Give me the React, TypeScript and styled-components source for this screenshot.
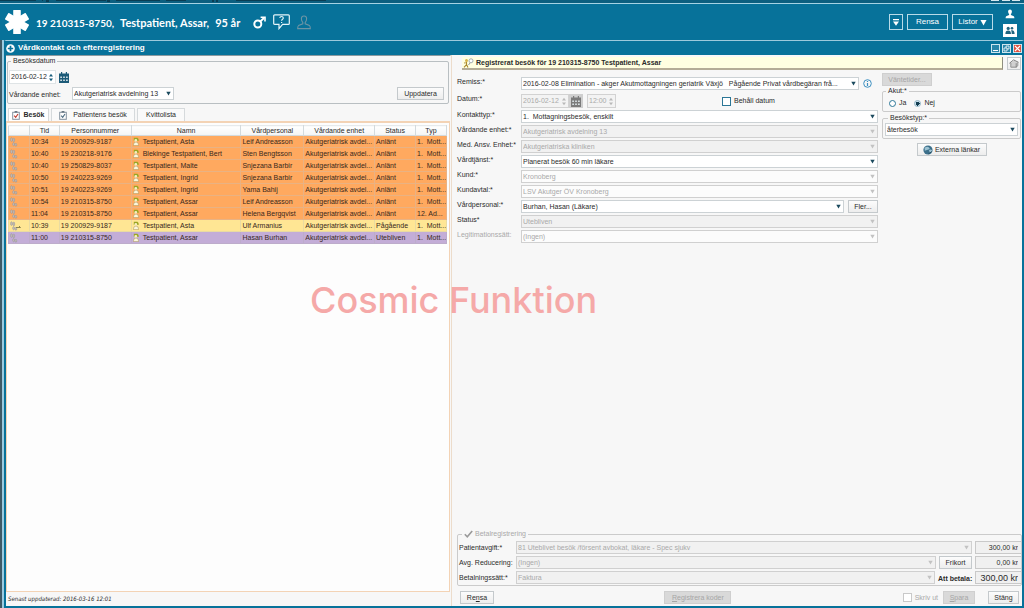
import React, { ReactNode, useId } from "react";
import styled, { createGlobalStyle, css } from "styled-components";

const teal = "#07729a";
const ink = "#2b2b2b";
const faded = "#a9a9a9";

const GlobalStyle = createGlobalStyle`
  * { box-sizing: border-box; }
  body { margin: 0; background: #f7f7f7; }
  body, button, input, select { font-family: "Liberation Sans", Arial, sans-serif; font-size: 7px; line-height: 8px; color: ${ink}; }
  svg { display: block; flex: none; }
`;

const Page = styled.div`
  display: flex;
  flex-direction: column;
  min-height: 100vh;
  background: #f7f7f7;
`;

/* ---------- top of the window ---------- */

const MenuStrip = styled.div`
  display: flex;
  justify-content: space-between;
  height: 4px;
  background: #0c5f80;
  border-bottom: 1px solid #a5d3e4;
`;

const PatientBar = styled.header`
  display: flex;
  align-items: center;
  height: 36px;
  padding: 0 7px 0 5px;
  background: ${teal};
  color: #fff;
`;

const PatientText = styled.h1`
  display: flex;
  align-items: baseline;
  gap: 6px;
  margin: 0 13px 0 7px;
  padding-top: 2px;
  font-family: Lato, sans-serif;
  font-size: 11px;
  line-height: 14px;
  font-weight: 700;
  white-space: nowrap;
`;

const PatientNumber = styled.span`
  font-size: 10px;
`;

const PatientIcons = styled.div`
  display: flex;
  align-items: center;
  gap: 7px;
`;

const BarActions = styled.div`
  display: flex;
  align-items: center;
  gap: 4px;
  margin-left: auto;
`;

const BarButton = styled.button<{ $w: number }>`
  display: flex;
  align-items: center;
  justify-content: center;
  gap: 2px;
  width: ${(p) => p.$w}px;
  height: 16px;
  padding: 0;
  border: 1px solid #b8dbe8;
  background: transparent;
  color: #fff;
  font-size: 8px;
`;

const UserStack = styled.div`
  display: flex;
  flex-direction: column;
  align-items: center;
  gap: 3px;
  width: 14px;
  margin-left: 6px;
`;

const IconBox = styled.button<{ $bg?: string }>`
  display: flex;
  align-items: center;
  justify-content: center;
  width: 14px;
  height: 13px;
  padding: 0;
  border: 0;
  background: ${(p) => p.$bg ?? "transparent"};
`;

/* ---------- inner window ---------- */

const Body = styled.div`
  flex: 1;
  display: flex;
  border-left: 2px solid #3f5a66;
  background: #9ccbe0;
  padding-left: 2px;
`;

const InnerWindow = styled.main`
  flex: 1;
  min-width: 0;
  display: flex;
  flex-direction: column;
  border: 2px solid ${teal};
  border-top: 1px solid #9cc9dc;
  background: #f7f7f7;
`;

const TitleBar = styled.div`
  display: flex;
  align-items: center;
  gap: 2px;
  height: 14px;
  background: ${teal};
  color: #fff;
`;

const Title = styled.h2`
  flex: 1;
  margin: 0 0 0 1px;
  font-size: 8px;
  line-height: 10px;
  font-weight: 700;
`;

const WindowButton = styled.button<{ $close?: boolean }>`
  display: flex;
  align-items: center;
  justify-content: center;
  width: 9px;
  height: 9px;
  padding: 0;
  border: 1px solid #cfe6ef;
  background: ${(p) => (p.$close ? "#e0503f" : "#2a86a9")};
`;

const Split = styled.div`
  flex: 1;
  display: grid;
  grid-template-columns: minmax(0, 445fr) minmax(0, 571fr);
`;

const LeftPane = styled.section`
  display: flex;
  flex-direction: column;
  border-top: 1px solid #8c9aa0;
  border-right: 1px solid #f7f7f7;
`;

const Row = styled.div<{ $gap?: number; $center?: boolean }>`
  display: flex;
  align-items: center;
  justify-content: ${(p) => (p.$center ? "center" : "flex-start")};
  gap: ${(p) => p.$gap ?? 0}px;
`;

const Group = styled.fieldset<{ $tone?: string }>`
  min-width: 0;
  margin: 0;
  padding: 0;
  border: 1px solid ${(p) => p.$tone ?? "#cbcbcb"};
  border-radius: 2px;
`;

const Legend = styled.legend<{ $faded?: boolean }>`
  display: flex;
  align-items: center;
  gap: 2px;
  margin-left: 3px;
  padding: 0 2px;
  color: ${(p) => (p.$faded ? faded : ink)};
`;

const VisitGroup = styled(Group)`
  margin: 1px 1px 0;
  height: 47px;
  padding-top: 5px;
  & ${Row} { padding: 0 4px 0 1px; }
  & ${Row} + ${Row} { margin-top: 3px; }
`;

const PushRight = styled.div`
  margin-left: auto;
`;

const UnitLabel = styled.label`
  width: 63px;
  padding-top: 3px;
`;

const Button = styled.button<{ $w?: number }>`
  display: inline-flex;
  align-items: center;
  justify-content: center;
  gap: 2px;
  width: ${(p) => (p.$w ? `${p.$w}px` : "auto")};
  height: 13px;
  flex: none;
  padding: 0;
  border: 1px solid #c4c9cc;
  background: linear-gradient(#fcfcfc, #ededed);
  color: ${ink};
  white-space: nowrap;
  &:disabled { background: #d9d9d9; border-color: #cfcfcf; color: #a6a6a6; }
`;

const SpinBox = styled.div<{ $w: number; $off?: boolean }>`
  display: flex;
  align-items: center;
  width: ${(p) => p.$w}px;
  height: 14px;
  padding: 0 2px 0 1px;
  border: 1px solid ${(p) => (p.$off ? "#d2d2d2" : "#dfe4e6")};
  background: ${(p) => (p.$off ? "#f3f3f3" : "#fff")};
`;

const SpinInput = styled.input`
  flex: 1;
  min-width: 0;
  padding: 0;
  border: 0;
  background: transparent;
  &:disabled { color: ${faded}; }
`;

const DateButton = styled.button<{ $off?: boolean }>`
  display: flex;
  align-items: center;
  justify-content: center;
  width: 14px;
  height: 14px;
  padding: 0;
  border: 0;
  background: ${(p) => (p.$off ? "#cfcfcf" : "transparent")};
`;

const SelectCell = styled.div<{ $w?: number }>`
  display: grid;
  align-items: center;
  ${(p) => (p.$w ? css`width: ${p.$w}px;` : css`flex: 1; min-width: 0;`)}
  & > * { grid-area: 1 / 1; }
  & > svg { justify-self: end; margin-right: 3px; pointer-events: none; }
`;

const SelectBox = styled.select<{ $tone?: "grey" | "white" }>`
  appearance: none;
  width: 100%;
  height: 13px;
  padding: 0 8px 0 1px;
  border: 1px solid #ccd2d5;
  border-radius: 0;
  background: #fff;
  text-overflow: ellipsis;
  &:disabled {
    opacity: 1;
    color: ${faded};
    border-color: #d0d0d0;
    background: ${(p) => (p.$tone === "white" ? "#fcfcfc" : "#f1f1f1")};
  }
`;

/* ---------- visit list ---------- */

const Tabs = styled.div`
  display: flex;
  gap: 2px;
  margin: 4px 0 0 2px;
`;

const Tab = styled.button<{ $on?: boolean; $w: number }>`
  display: flex;
  align-items: center;
  justify-content: center;
  gap: ${(p) => (p.$on ? 3 : 6)}px;
  width: ${(p) => p.$w}px;
  height: 13px;
  padding: 0;
  border: 1px solid #d6dadc;
  border-bottom: 0;
  background: ${(p) => (p.$on ? "#fff" : "#fafafa")};
  font-weight: ${(p) => (p.$on ? 700 : 400)};
`;

const ListPanel = styled.div`
  flex: 1;
  padding: 2px 2px 0 1px;
  border: 1px solid #f3d3b5;
  border-width: 2px 1px 1px;
  background: #fdfdfd;
`;

const VisitTable = styled.table`
  width: 100%;
  table-layout: fixed;
  border-collapse: collapse;
`;

const HeadCell = styled.th`
  height: 10px;
  padding: 0;
  border: 1px solid #d3dadd;
  border-top-color: #e6eaec;
  background: linear-gradient(#fff, #f3f4f4);
  font-weight: 400;
`;

const rowColors = { arrived: "#ffa95f", ongoing: "#ffe694", missed: "#c3add7" };
const rowLines = { arrived: "#e9b283", ongoing: "#e9dba2", missed: "#bdaccb" };

const VisitRow = styled.tr<{ $state: keyof typeof rowColors }>`
  background: ${(p) => rowColors[p.$state]};
  color: #38281c;
  & > td { border-color: ${(p) => rowLines[p.$state]}; }
`;

const Cell = styled.td`
  height: 12px;
  padding: 0 0 0 1px;
  border: 1px solid;
  overflow: hidden;
  white-space: pre;
`;

const NameCell = styled.div`
  display: flex;
  align-items: center;
  gap: 4px;
`;

const Updated = styled.p`
  margin: 0;
  padding: 3px 2px;
  font-family: "DejaVu Sans Condensed", "DejaVu Sans", sans-serif;
  font-style: italic;
  font-size: 6px;
  line-height: 8px;
`;

/* ---------- registration form ---------- */

const RightPane = styled.section`
  display: flex;
  flex-direction: column;
  padding: 2px 1px 1px 5px;
  border-left: 1px solid #ecdccb;
`;

const Banner = styled.div`
  display: flex;
  gap: 4px;
  padding-left: 5px;
  margin-bottom: 3px;
`;

const BannerText = styled.h3`
  flex: 1;
  display: flex;
  align-items: center;
  gap: 2px;
  height: 13px;
  margin: 0;
  padding-left: 1px;
  border-right: 1px solid #8f8f80;
  border-bottom: 2px solid #b4ac96;
  background: #ffffe1;
  font-size: 7px;
  font-weight: 700;
`;

const FormArea = styled.div`
  display: grid;
  grid-template-columns: minmax(0, 1fr) 139px;
  column-gap: 4px;
`;

const Fields = styled.div`
  display: flex;
  flex-direction: column;
  gap: 2px;
  padding-top: 4px;
`;

const Field = styled.div<{ $spaced?: boolean }>`
  display: flex;
  align-items: flex-start;
  margin-bottom: ${(p) => (p.$spaced ? 2 : 0)}px;
`;

const FieldLabel = styled.label<{ $faded?: boolean }>`
  flex: none;
  width: 64px;
  padding-top: 1px;
  color: ${(p) => (p.$faded ? faded : ink)};
  white-space: nowrap;
`;

const FieldBody = styled.div<{ $gap?: number; $end?: number }>`
  flex: 1;
  min-width: 0;
  display: flex;
  align-items: center;
  gap: ${(p) => p.$gap ?? 0}px;
  padding-right: ${(p) => p.$end ?? 0}px;
`;

const TimeSlot = styled.div`
  margin-left: 4px;
`;

const Check = styled.label<{ $faded?: boolean; $left?: number }>`
  display: flex;
  align-items: center;
  gap: 3px;
  margin-left: ${(p) => p.$left ?? 0}px;
  color: ${(p) => (p.$faded ? faded : ink)};
`;

const CheckInput = styled.input`
  appearance: none;
  width: 9px;
  height: 9px;
  margin: 0;
  border: 1px solid #2b7696;
  background: #fff;
  &:disabled { border-color: #c9c9c9; }
`;

const RadioInput = styled.input`
  appearance: none;
  width: 7px;
  height: 7px;
  margin: 0;
  border: 1px solid #2b7696;
  border-radius: 50%;
  background: #fff;
  &:checked { background: radial-gradient(#123c50 0 2px, #cfe3ee 2px); border-color: #8fb4c6; }
`;

const Side = styled.aside`
  display: flex;
  flex-direction: column;
  gap: 4px;
`;

const AcuteGroup = styled(Group)`
  margin-top: -3px;
`;

const TypeGroup = styled(Group)`
  margin-top: -2px;
  padding: 1px 2px 2px;
`;

const RadioRow = styled(Row)`
  height: 16px;
  padding: 0 6px;
`;

const Payment = styled(Group)`
  margin-top: auto;
  margin-right: -1px;
  padding: 3px 0 1px 1px;
  display: flex;
  flex-direction: column;
  gap: 2px;
`;

const PayRow = styled(Row)`
  align-items: flex-start;
  gap: 3px;
`;

const PayLabel = styled(FieldLabel)`
  width: 54px;
  padding-top: 3px;
`;

const Amount = styled.input<{ $big?: boolean }>`
  width: 46px;
  height: 13px;
  padding: 0 3px 0 0;
  border: 1px solid #c9c9c9;
  border-right: 0;
  background: #f0f0f0;
  text-align: right;
  font-size: ${(p) => (p.$big ? 9 : 7)}px;
`;

const Due = styled.strong`
  width: 34px;
  padding-top: 4px;
  text-align: right;
  white-space: nowrap;
`;

const Footer = styled.footer`
  display: grid;
  grid-template-columns: 204fr auto 287fr;
  align-items: center;
  margin-top: 5px;
  padding: 0 2px 1px 3px;
`;

const FooterEnd = styled.div`
  display: flex;
  align-items: center;
  justify-content: flex-end;
  gap: 5px;
  & > :last-child { margin-left: 8px; }
`;

const Watermark = styled.div`
  position: absolute;
  top: 278px;
  left: 310px;
  font-family: Inter, sans-serif;
  font-size: 36px;
  font-weight: 500;
  line-height: 44px;
  color: #f5a9a8;
  white-space: nowrap;
  pointer-events: none;
`;

/* ---------- icons ---------- */

const Arrow = ({ color = "#1b4a5e", size = 5 }: { color?: string; size?: number }) => (
  <svg width={size} height={size} viewBox="0 0 5 5"><path d="M.3.700h4.400L2.500 4.600z" fill={color} /></svg>
);

const Spinner = ({ color }: { color: string }) => (
  <svg width="4" height="9" viewBox="0 0 4 9"><path d="M0 3.400h4L2 .8zM0 5.600h4L2 8.200z" fill={color} /></svg>
);

const StarOfLife = () => (
  <svg width="24" height="24" viewBox="-12 -12 24 24" fill="#fff">
    {[0, 60, 120].map((a) => <rect key={a} x="-3.8" y="-12" width="7.600" height="24" rx=".6" transform={`rotate(${a})`} />)}
  </svg>
);

const Male = () => (
  <svg width="13" height="13" viewBox="0 0 13 13" fill="none" stroke="#fff">
    <circle cx="4.800" cy="8" r="3.500" strokeWidth="2" /><path d="M7.300 5.500 11 2" strokeWidth="1.800" /><path d="M7.600 1.300h4.400v4.200" strokeWidth="1.600" />
  </svg>
);

const HelpBubble = () => (
  <svg width="17" height="16" viewBox="0 0 17 16" fill="none" stroke="#e6f4f9">
    <path d="M1.700.8h13.600q1 0 1 1v7.600q0 1-1 1H9.600L6 14.600V10.400H1.700q-1 0-1-1V1.800q0-1 1-1z" strokeWidth="1.200" />
    <path d="M6.800 4q.2-1.500 1.800-1.500T10.300 4q0 .9-1 1.500-.7.400-.7 1.200M8.600 7.900v1.100" strokeWidth="1.200" />
  </svg>
);

const PersonOutline = () => (
  <svg width="14" height="15" viewBox="0 0 14 15" fill="none" stroke="#6c95a5" strokeWidth="1.100">
    <path d="M7 1C5 1 4.300 2.300 4.400 4c.1 1.600.6 2.600 1.400 3.400v1.400L1.500 10.600q-.8.500-.8 3h12.600q0-2.500-.8-3L8.200 8.800V7.400C9 6.600 9.500 5.600 9.600 4 9.700 2.300 9 1 7 1z" />
  </svg>
);

const Person = () => (
  <svg width="10" height="10" viewBox="0 0 10 10" fill="#fff">
    <path d="M5 .4C3.600.4 3 1.400 3.100 2.700c.1 1.100.5 1.900 1 2.400v.9L1.200 7.200Q.6 7.600.6 9.300h8.800q0-1.700-.6-2.100L5.900 6v-.9c.5-.5.9-1.300 1-2.400C7 1.400 6.400.4 5 .4z" />
  </svg>
);

const People = () => (
  <svg width="10" height="9" viewBox="0 0 10 9" fill="#21657f">
    <circle cx="3.200" cy="2.400" r="1.600" /><path d="M.4 8q0-3.400 2.800-3.400T6 8z" />
    <circle cx="7" cy="2.200" r="1.300" /><path d="M6 4.300q3.600-.8 3.600 3.700H6.700Q6.800 5.600 6 4.300z" />
  </svg>
);

const DownBar = () => (
  <svg width="8" height="9" viewBox="0 0 8 9" fill="#fff"><path d="M1 1h6v1.300H1zM1 3.600h6L4 7.800z" /></svg>
);

const PlusDisc = () => (
  <svg width="9" height="9" viewBox="0 0 9 9"><circle cx="4.500" cy="4.500" r="4.300" fill="#fff" /><path d="M4.500 1.800v5.400M1.800 4.500h5.400" stroke={teal} strokeWidth="1.700" /></svg>
);

const Calendar = ({ color }: { color: string }) => (
  <svg width="10" height="11" viewBox="0 0 10 11">
    <path d="M0 1.600h10V11H0zM2 0h1.200v2H2zM6.800 0H8v2H6.800z" fill={color} />
    <path d="M1.300 4.500h1.600v1.400H1.300zM4.200 4.500h1.600v1.400H4.200zM7.100 4.500h1.600v1.400H7.100zM1.300 7.500h1.600v1.400H1.300zM4.200 7.500h1.600v1.400H4.200zM7.100 7.500h1.600v1.400H7.100z" fill="#dfe8ec" />
  </svg>
);

const Clipboard = ({ tick }: { tick: string }) => (
  <svg width="8" height="9" viewBox="0 0 8 9" fill="none">
    <rect x=".7" y="1.300" width="6.600" height="7" fill="#fff" stroke="#8593a0" /><path d="M2.600.8h2.800" stroke="#5d6c78" strokeWidth="1.400" />
    <path d="M2.200 4.600l1.500 1.800L6 3" stroke={tick} strokeWidth="1.100" />
  </svg>
);

const Feet = ({ active }: { active?: boolean }) => (
  <svg width="11" height="10" viewBox="0 0 11 10" fill="#c9bdb6" stroke="#8d9096" strokeWidth=".5">
    <ellipse cx="1.500" cy="2.600" rx=".9" ry="1.900" /><ellipse cx="3.800" cy="3" rx=".9" ry="1.900" />
    <ellipse cx="3.600" cy="7.200" rx=".9" ry="1.600" /><ellipse cx="5.900" cy="7.800" rx=".9" ry="1.500" />
    {active && <path d="M6 6.500h4.500M9 5l1.500 1.500" fill="none" stroke="#8b8350" strokeWidth="1" />}
  </svg>
);

const PatientMark = () => (
  <svg width="6" height="9" viewBox="0 0 6 9">
    <path d="M.8.700h3.600L5.600 2v2H.8z" fill="#9aa624" /><circle cx="2.800" cy="3.500" r="1.400" fill="#f6edc2" />
    <path d="M.3 8.600Q.3 5 3 5t2.700 3.600z" fill="#fbf6dc" stroke="#a58e50" strokeWidth=".5" />
  </svg>
);

const BannerMark = () => (
  <svg width="11" height="10" viewBox="0 0 11 10" fill="none">
    <circle cx="3.500" cy="2.500" r="1.500" fill="#d8b548" /><path d="M3.500 4v2.500L1 9.300M3.500 6.500 5 9.500M1 5l2.500-.5" stroke="#a98a2c" strokeWidth="1.100" />
    <circle cx="8" cy="2.800" r="2" fill="#fff" stroke="#8f9aa0" strokeWidth=".8" /><path d="M7 5 5.500 7" stroke="#8f9aa0" />
  </svg>
);

const HomeMark = () => (
  <svg width="10" height="9" viewBox="0 0 10 9">
    <path d="M1.600 4 5 1.600 8.600 3.600 7.600 8.200H2.400z" fill="#d0d0d0" />
    <path d="M.4 4.300 4.600.9 9.500 3.300" fill="none" stroke="#707070" strokeWidth=".9" />
    <path d="M1.800 4v4.200h5.400L8.800 6.800V3.400M7.200 8.200V4.200" fill="none" stroke="#6a6a6a" strokeWidth=".7" />
  </svg>
);

const Info = () => (
  <svg width="9" height="9" viewBox="0 0 9 9" fill="none" stroke="#3c8fc0"><circle cx="4.500" cy="4.500" r="3.800" /><path d="M4.500 4v3M4.500 2v1.100" strokeWidth="1.200" /></svg>
);

const Globe = () => (
  <svg width="10" height="10" viewBox="0 0 10 10"><circle cx="5" cy="5" r="4.600" fill="#3b6f8a" /><path d="M1.500 3Q4 1 6 2.500T4 5 2 6zM6 5q2-1 3 .5T7 8.500z" fill="#9dc3d3" /><path d="M5.500 8.800 9 6.500" stroke="#234a5e" /></svg>
);

const Tick = () => (
  <svg width="9" height="8" viewBox="0 0 9 8"><path d="M.8 4.200 3.300 6.800 8.200.9" fill="none" stroke="#9a9a9a" strokeWidth="1.600" /></svg>
);

const MenuSpecks = () => (
  <svg width="340" height="3" viewBox="0 0 340 3" fill="#0a2f40">
    <path d="M0 0h36v1H0zM42 0h1v1h-1zM46 0h3v2h-3zM56 0h50v1H56zM107 0h3v2h-3zM116 0h44v1h-44zM166 0h20v1h-20zM212 0h2v2h-2zM216 0h2v2h-2zM236 0h90v1h-90z" opacity=".7" />
  </svg>
);

const FrameEdges = () => (
  <svg width="34" height="3" viewBox="0 0 34 3" fill="#d5e8ef"><path d="M1 0h8v1H1zM12 0h8v1h-8zM22 0h8v1h-8z" /></svg>
);

/* ---------- pieces ---------- */

type DropProps = { id?: string; value: string; width?: number; disabled?: boolean; tone?: "grey" | "white"; label?: string };

const Drop = ({ id, value, width, disabled, tone, label }: DropProps) => (
  <SelectCell $w={width}>
    <SelectBox id={id} disabled={disabled} $tone={tone} aria-label={label}>
      <option>{value}</option>
    </SelectBox>
    <Arrow color={disabled ? "#c2c2c2" : undefined} />
  </SelectCell>
);

const Spin = ({ id, value, width, disabled, label }: DropProps) => (
  <SpinBox $w={width ?? 46} $off={disabled}>
    <SpinInput id={id} defaultValue={value} disabled={disabled} aria-label={label} />
    <Spinner color={disabled ? "#b9b9b9" : "#1b5f7d"} />
  </SpinBox>
);

type FieldRowProps = { label: string; value: string; disabled?: boolean; tone?: "grey" | "white"; faded?: boolean; extra?: ReactNode };

const FieldRow = ({ label, value, disabled, tone, faded: dim, extra }: FieldRowProps) => {
  const id = useId();
  return (
    <Field>
      <FieldLabel htmlFor={id} $faded={dim}>{label}</FieldLabel>
      <FieldBody $gap={4}>
        <Drop id={id} value={value} disabled={disabled} tone={tone} />
        {extra}
      </FieldBody>
    </Field>
  );
};

const UNIT = "Akutgeriatrisk avdel...";

type Visit = [keyof typeof rowColors, string, string, string, string, string, string];

const visits: Visit[] = [
  ["arrived", "10:34", "19 200929-9187", "Testpatient, Asta", "Leif Andreasson", "Anlänt", "1.  Mott..."],
  ["arrived", "10:40", "19 230218-9176", "Blekinge Testpatient, Bert", "Sten Bengtsson", "Anlänt", "1.  Mott..."],
  ["arrived", "10:40", "19 250829-8037", "Testpatient, Malte", "Snjezana Barbir", "Anlänt", "1.  Mott..."],
  ["arrived", "10:50", "19 240223-9269", "Testpatient, Ingrid", "Snjezana Barbir", "Anlänt", "1.  Mott..."],
  ["arrived", "10:51", "19 240223-9269", "Testpatient, Ingrid", "Yama Bahij", "Anlänt", "1.  Mott..."],
  ["arrived", "10:54", "19 210315-8750", "Testpatient, Assar", "Leif Andreasson", "Anlänt", "1.  Mott..."],
  ["arrived", "11:04", "19 210315-8750", "Testpatient, Assar", "Helena Bergqvist", "Anlänt", "12. Ad..."],
  ["ongoing", "10:39", "19 200929-9187", "Testpatient, Asta", "Ulf Armanius", "Pågående", "1.  Mott..."],
  ["missed", "11:00", "19 210315-8750", "Testpatient, Assar", "Hasan Burhan", "Utebliven", "1.  Mott..."],
];

const columns: [string, number][] = [
  ["", 21], ["Tid", 30], ["Personnummer", 72], ["Namn", 110], ["Vårdpersonal", 63], ["Vårdande enhet", 71], ["Status", 41], ["Typ", 31],
];

const VisitList = () => (
  <ListPanel>
    <VisitTable>
      <colgroup>
        {columns.map(([name, w]) => <col key={name} width={`${(w / 439) * 100}%`} />)}
      </colgroup>
      <thead>
        <tr>{columns.map(([name]) => <HeadCell key={name}>{name}</HeadCell>)}</tr>
      </thead>
      <tbody>
        {visits.map(([state, time, pnr, name, staff, status, type]) => (
          <VisitRow key={time + name} $state={state}>
            <Cell><Feet active={state === "ongoing"} /></Cell>
            <Cell>{time}</Cell>
            <Cell>{pnr}</Cell>
            <Cell><NameCell><PatientMark />{name}</NameCell></Cell>
            <Cell>{staff}</Cell>
            <Cell>{UNIT}</Cell>
            <Cell>{status}</Cell>
            <Cell>{type}</Cell>
          </VisitRow>
        ))}
      </tbody>
    </VisitTable>
  </ListPanel>
);

export default function App() {
  return (
    <Page>
      <GlobalStyle />
      <MenuStrip><MenuSpecks /><FrameEdges /></MenuStrip>
      <PatientBar>
        <StarOfLife />
        <PatientText>
          <PatientNumber>19 210315-8750,</PatientNumber>
          <span>Testpatient, Assar,</span>
          <span>95 år</span>
        </PatientText>
        <PatientIcons><Male /><HelpBubble /><PersonOutline /></PatientIcons>
        <BarActions>
          <BarButton $w={14} aria-label="Visa"><DownBar /></BarButton>
          <BarButton $w={41}>Rensa</BarButton>
          <BarButton $w={41}>Listor <Arrow color="#fff" size={7} /></BarButton>
          <UserStack>
            <IconBox aria-label="Användare"><Person /></IconBox>
            <IconBox $bg="#fff" aria-label="Grupp"><People /></IconBox>
          </UserStack>
        </BarActions>
      </PatientBar>
      <Body>
        <InnerWindow>
          <TitleBar>
            <PlusDisc />
            <Title>Vårdkontakt och efterregistrering</Title>
            <WindowButton aria-label="Minimera"><svg width="5" height="5"><path d="M0 4.500h5" stroke="#fff" /></svg></WindowButton>
            <WindowButton aria-label="Återställ"><svg width="7" height="7" fill="none" stroke="#fff" strokeWidth=".8"><path d="M1 3h3v3H1zM3 3V1h3v3H4" /></svg></WindowButton>
            <WindowButton $close aria-label="Stäng fönster"><svg width="7" height="7"><path d="M1 1l5 5M6 1 1 6" stroke="#fff" strokeWidth="1.200" /></svg></WindowButton>
          </TitleBar>
          <Split>
            <LeftPane>
              <VisitGroup $tone="#b9bfc2">
                <Legend>Besöksdatum</Legend>
                <Row $gap={1}>
                  <Spin value="2016-02-12" width={47} label="Besöksdatum" />
                  <DateButton aria-label="Kalender"><Calendar color="#1d5b78" /></DateButton>
                </Row>
                <Row>
                  <UnitLabel htmlFor="unit">Vårdande enhet:</UnitLabel>
                  <Drop id="unit" value="Akutgeriatrisk avdelning 13" width={102} />
                  <PushRight><Button $w={47}>Uppdatera</Button></PushRight>
                </Row>
              </VisitGroup>
              <Tabs>
                <Tab $on $w={41}><Clipboard tick="#c0392b" />Besök</Tab>
                <Tab $w={84}><Clipboard tick="#4c6c82" />Patientens besök</Tab>
                <Tab $w={48}>Kvittolista</Tab>
              </Tabs>
              <VisitList />
              <Updated>Senast uppdaterad: 2016-03-16 12:01</Updated>
            </LeftPane>
            <RightPane>
              <Banner>
                <BannerText><BannerMark />Registrerat besök för 19 210315-8750 Testpatient, Assar</BannerText>
                <Button $w={14} aria-label="Hem"><HomeMark /></Button>
              </Banner>
              <FormArea>
                <Fields>
                  <Field $spaced>
                    <FieldLabel htmlFor="referral">Remiss:*</FieldLabel>
                    <FieldBody $gap={4} $end={6}>
                      <Drop
                        id="referral"
                        value={"2016-02-08 Elimination - akger Akutmottagningen geriatrik Växjö\u00a0\u00a0\u00a0Pågående Privat vårdbegäran frå..."}
                      />
                      <Info />
                    </FieldBody>
                  </Field>
                  <Field>
                    <FieldLabel htmlFor="date">Datum:*</FieldLabel>
                    <FieldBody>
                      <Spin id="date" value="2016-02-12" width={48} disabled />
                      <DateButton $off disabled aria-label="Kalender"><Calendar color="#7b7b7b" /></DateButton>
                      <TimeSlot><Spin value="12:00" width={29} disabled label="Tid" /></TimeSlot>
                      <Check $left={106}><CheckInput type="checkbox" />Behåll datum</Check>
                    </FieldBody>
                  </Field>
                  <FieldRow label="Kontakttyp:*" value={"1.\u00a0\u00a0Mottagningsbesök, enskilt"} />
                  <FieldRow label="Vårdande enhet:*" value="Akutgeriatrisk avdelning 13" disabled />
                  <FieldRow label="Med. Ansv. Enhet:*" value="Akutgeriatriska kliniken" disabled />
                  <FieldRow label="Vårdtjänst:*" value="Planerat besök 60 min läkare" />
                  <FieldRow label="Kund:*" value="Kronoberg" disabled tone="white" />
                  <FieldRow label="Kundavtal:*" value="LSV Akutger ÖV Kronoberg" disabled tone="white" />
                  <FieldRow label="Vårdpersonal:*" value="Burhan, Hasan (Läkare)" extra={<Button $w={30}>Fler...</Button>} />
                  <FieldRow label="Status*" value="Utebliven" disabled />
                  <FieldRow label="Legitimationssätt:" value="(Ingen)" disabled tone="white" faded />
                </Fields>
                <Side>
                  <Row><Button $w={50} disabled>Väntetider...</Button></Row>
                  <AcuteGroup>
                    <Legend>Akut:*</Legend>
                    <RadioRow $gap={8}>
                      <Check><RadioInput type="radio" name="acute" />Ja</Check>
                      <Check><RadioInput type="radio" name="acute" defaultChecked />Nej</Check>
                    </RadioRow>
                  </AcuteGroup>
                  <TypeGroup>
                    <Legend>Besökstyp:*</Legend>
                    <Row><Drop value="återbesök" label="Besökstyp" /></Row>
                  </TypeGroup>
                  <Row $center><Button $w={70}><Globe />Externa länkar</Button></Row>
                </Side>
              </FormArea>
              <Payment>
                <Legend $faded><Tick />Betalregistrering</Legend>
                <PayRow>
                  <PayLabel htmlFor="fee">Patientavgift:*</PayLabel>
                  <Drop id="fee" value="81 Uteblivet besök /försent avbokat, läkare - Spec sjukv" disabled />
                  <Amount aria-label="Patientavgift" readOnly value="300,00 kr" />
                </PayRow>
                <PayRow>
                  <PayLabel htmlFor="reduction">Avg. Reducering:</PayLabel>
                  <Drop id="reduction" value="(Ingen)" disabled />
                  <Button $w={33}>Frikort</Button>
                  <Amount aria-label="Reducering" readOnly value="0,00 kr" />
                </PayRow>
                <PayRow>
                  <PayLabel htmlFor="method">Betalningssätt:*</PayLabel>
                  <Drop id="method" value="Faktura" disabled />
                  <Due>Att betala:</Due>
                  <Amount $big aria-label="Att betala" readOnly value="300,00 kr" />
                </PayRow>
              </Payment>
              <Footer>
                <div><Button $w={34}><span>Re<u>n</u>sa</span></Button></div>
                <Button $w={67} disabled><span><u>R</u>egistrera koder</span></Button>
                <FooterEnd>
                  <Check $faded><CheckInput type="checkbox" disabled />Skriv ut</Check>
                  <Button $w={32} disabled><span><u>S</u>para</span></Button>
                  <Button $w={31}><span>Stän<u>g</u></span></Button>
                </FooterEnd>
              </Footer>
            </RightPane>
          </Split>
        </InnerWindow>
      </Body>
      <Watermark>Cosmic Funktion</Watermark>
    </Page>
  );
}
